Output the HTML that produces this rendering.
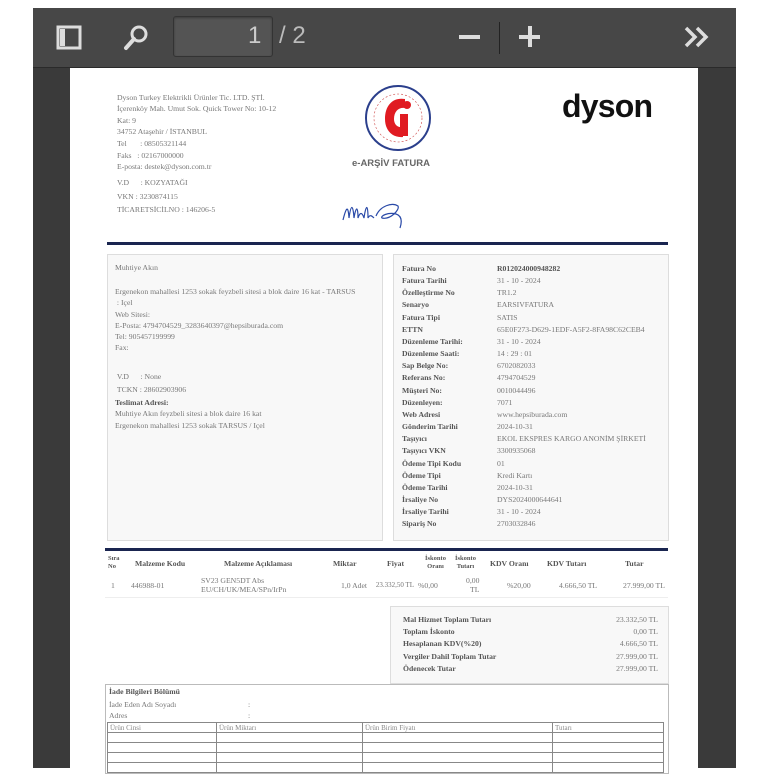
<!DOCTYPE html>
<html><head><meta charset="utf-8"><style>
*{margin:0;padding:0;box-sizing:border-box}
body{width:768px;height:768px;background:#fff;position:relative;overflow:hidden;font-family:"Liberation Serif",serif;color:#666}
.a{position:absolute;white-space:nowrap}
#frame{position:absolute;left:33px;top:8px;width:703px;height:760px;background:#3a3a3a}
#tb{position:absolute;left:33px;top:8px;width:703px;height:60px;background:#474747;border-bottom:1px solid #2a2a2a}
#page{position:absolute;left:70px;top:68px;width:628px;height:700px;background:#fff}
.s{font-size:7.7px;color:#777}
.b{font-weight:bold;color:#555}
.box{position:absolute;background:#f8f8f8;border:1px solid #ddd}
table{border-collapse:collapse}
</style></head><body>
<div id="frame"></div>
<div id="tb">
 <svg class="a" style="left:22px;top:17px" width="28" height="26" viewBox="0 0 28 26"><rect x="3" y="2" width="22" height="21" fill="none" stroke="#ddd" stroke-width="3"/><rect x="5" y="4" width="5" height="17" fill="#ddd"/></svg>
 <svg class="a" style="left:88px;top:15px" width="30" height="30" viewBox="0 0 30 30"><circle cx="18" cy="11" r="7" fill="none" stroke="#ddd" stroke-width="3"/><line x1="13" y1="16" x2="5" y2="25" stroke="#ddd" stroke-width="4" stroke-linecap="round"/></svg>
 <div class="a" style="left:140px;top:8px;width:100px;height:41px;background:#545454;border:1px solid #333;border-radius:3px;box-shadow:inset 0 1px 2px #3a3a3a"></div>
 <div class="a" style="left:215px;top:14px;font:24px 'Liberation Sans',sans-serif;color:#ccc">1</div>
 <div class="a" style="left:246px;top:14px;font:24px 'Liberation Sans',sans-serif;color:#bbb">/ 2</div>
 <div class="a" style="left:426px;top:27px;width:21px;height:4px;background:#ddd"></div>
 <div class="a" style="left:466px;top:14px;width:1px;height:32px;background:#222"></div>
 <div class="a" style="left:486px;top:27px;width:21px;height:4px;background:#ddd"></div>
 <div class="a" style="left:494.5px;top:18px;width:4px;height:21px;background:#ddd"></div>
 <svg class="a" style="left:650px;top:16px" width="30" height="26" viewBox="0 0 30 26"><path d="M3 4l9 9-9 9M14 4l9 9-9 9" fill="none" stroke="#ddd" stroke-width="3.5"/></svg>
</div>
<div id="page"></div>

<div class="a s" style="left:117px;top:92px;line-height:11.3px">Dyson Turkey Elektrikli Ürünler Tic. LTD. ŞTİ.<br>İçerenköy Mah. Umut Sok. Quick Tower No: 10-12<br>Kat: 9<br>34752 Ataşehir / İSTANBUL</div>
<div class="a s" style="left:117px;top:138px;line-height:12px">Tel&nbsp;&nbsp;&nbsp;&nbsp;&nbsp;&nbsp;&nbsp;: 08505321144<br>Faks&nbsp;&nbsp;&nbsp;: 02167000000</div>
<div class="a s" style="left:117px;top:162px">E-posta: destek@dyson.com.tr</div>
<div class="a s" style="left:117px;top:176px;line-height:13.5px">V.D&nbsp;&nbsp;&nbsp;&nbsp;&nbsp;&nbsp;: KOZYATAĞI<br>VKN : 3230874115<br>TİCARETSİCİLNO : 146206-5</div>

<svg class="a" style="left:363px;top:83px" width="70" height="70" viewBox="0 0 70 70"><circle cx="35" cy="35" r="32" fill="#fff" stroke="#2b3f8c" stroke-width="2"/><circle cx="35" cy="35" r="24" fill="none" stroke="#c44" stroke-width="0.6" stroke-dasharray="2 2"/><path d="M42 16 C30 14 22 22 22 36 C22 48 30 55 40 54 L40 44 C34 45 31 41 31 36 C31 28 36 24 42 25Z" fill="#e01b22"/><rect x="37" y="31" width="8" height="22" fill="#e01b22"/><circle cx="44" cy="22" r="4" fill="#e01b22"/></svg>
<div class="a" style="left:352px;top:158px;font:bold 9.5px 'Liberation Sans',sans-serif;color:#666">e-ARŞİV FATURA</div>
<svg class="a" style="left:340px;top:198px" width="75" height="32" viewBox="0 0 75 32"><path d="M3 22 C6 10 8 6 9 20 C11 6 13 6 14 20 C16 8 18 8 18 20 C20 14 22 14 24 20 C26 6 28 6 28 20 C30 16 32 18 34 20 M36 18 C40 8 52 4 58 8 C60 12 50 22 42 20 C40 18 48 14 56 16 C62 18 62 24 60 30" fill="none" stroke="#2a4aa8" stroke-width="1.2"/></svg>
<div class="a" style="left:562px;top:88px;font:bold 32px 'Liberation Sans',sans-serif;color:#111;letter-spacing:-0.8px">dyson</div>

<div class="a" style="left:107px;top:242px;width:561px;height:3px;background:#1a2550"></div>

<div class="box" style="left:107px;top:254px;width:276px;height:287px"></div>
<div class="a s" style="left:115px;top:263px">Muhtiye Akın</div>
<div class="a s" style="left:115px;top:286px;line-height:11.3px">Ergenekon mahallesi 1253 sokak feyzbeli sitesi a blok daire 16 kat - TARSUS<br>&nbsp;: Içel<br>Web Sitesi:<br>E-Posta: 4794704529_3283640397@hepsiburada.com<br>Tel: 905457199999<br>Fax:</div>
<div class="a s" style="left:115px;top:370px;line-height:13px">&nbsp;V.D&nbsp;&nbsp;&nbsp;&nbsp;&nbsp;&nbsp;: None<br>&nbsp;TCKN : 28602903906</div>
<div class="a s" style="left:115px;top:397px;line-height:11.3px"><span class="b">Teslimat Adresi:</span><br>Muhtiye Akın feyzbeli sitesi a blok daire 16 kat<br>Ergenekon mahallesi 1253 sokak TARSUS / Içel</div>

<div class="box" style="left:393px;top:254px;width:276px;height:287px"></div>
<div class="a s b" style="left:402px;top:263px;line-height:12.15px">Fatura No<br>Fatura Tarihi<br>Özelleştirme No<br>Senaryo<br>Fatura Tipi<br>ETTN<br>Düzenleme Tarihi:<br>Düzenleme Saati:<br>Sap Belge No:<br>Referans No:<br>Müşteri No:<br>Düzenleyen:<br>Web Adresi<br>Gönderim Tarihi<br>Taşıyıcı<br>Taşıyıcı VKN<br>Ödeme Tipi Kodu<br>Ödeme Tipi<br>Ödeme Tarihi<br>İrsaliye No<br>İrsaliye Tarihi<br>Sipariş No</div>
<div class="a s" style="left:497px;top:263px;line-height:12.15px"><b style="color:#555">R012024000948282</b><br>31 - 10 - 2024<br>TR1.2<br>EARSIVFATURA<br>SATIS<br>65E0F273-D629-1EDF-A5F2-8FA98C62CEB4<br>31 - 10 - 2024<br>14 : 29 : 01<br>6702082033<br>4794704529<br>0010044496<br>7071<br>www.hepsiburada.com<br>2024-10-31<br>EKOL EKSPRES KARGO ANONİM ŞİRKETİ<br>3300935068<br>01<br>Kredi Kartı<br>2024-10-31<br>DYS2024000644641<br>31 - 10 - 2024<br>2703032846</div>

<div class="a" style="left:105px;top:548px;width:563px;height:3px;background:#1a2550"></div>
<div class="a s b" style="left:108px;top:555px;line-height:8px;font-size:6.5px">Sıra<br>No</div>
<div class="a s b" style="left:135px;top:559px">Malzeme Kodu</div>
<div class="a s b" style="left:224px;top:559px">Malzeme Açıklaması</div>
<div class="a s b" style="left:333px;top:559px">Miktar</div>
<div class="a s b" style="left:387px;top:559px">Fiyat</div>
<div class="a s b" style="left:425px;top:555px;line-height:8px;text-align:center;font-size:6.5px">İskonto<br>Oranı</div>
<div class="a s b" style="left:455px;top:555px;line-height:8px;text-align:center;font-size:6.5px">İskonto<br>Tutarı</div>
<div class="a s b" style="left:490px;top:559px">KDV Oranı</div>
<div class="a s b" style="left:547px;top:559px">KDV Tutarı</div>
<div class="a s b" style="left:625px;top:559px">Tutar</div>
<div class="a s" style="left:111px;top:581px">1</div>
<div class="a s" style="left:131px;top:581px">446988-01</div>
<div class="a s" style="left:201px;top:576px;line-height:9px">SV23 GEN5DT Abs<br>EU/CH/UK/MEA/SPn/IrPn</div>
<div class="a s" style="left:341px;top:581px">1,0 Adet</div>
<div class="a s" style="left:370px;top:581px;width:44px;text-align:right;font-size:7px">23.332,50 TL</div>
<div class="a s" style="left:418px;top:581px">%0,00</div>
<div class="a s" style="left:466px;top:576px;line-height:9px;text-align:right">0,00<br>TL</div>
<div class="a s" style="left:507px;top:581px">%20,00</div>
<div class="a s" style="left:559px;top:581px">4.666,50 TL</div>
<div class="a s" style="left:623px;top:581px">27.999,00 TL</div>
<div class="a" style="left:105px;top:597px;width:563px;height:1px;background:#eee"></div>

<div class="box" style="left:390px;top:606px;width:279px;height:78px"></div>
<div class="a s b" style="left:403px;top:614px;line-height:12.2px">Mal Hizmet Toplam Tutarı<br>Toplam İskonto<br>Hesaplanan KDV(%20)<br>Vergiler Dahil Toplam Tutar<br>Ödenecek Tutar</div>
<div class="a s" style="left:590px;top:614px;width:68px;line-height:12.2px;text-align:right">23.332,50 TL<br>0,00 TL<br>4.666,50 TL<br>27.999,00 TL<br>27.999,00 TL</div>

<div class="a" style="left:105px;top:684px;width:564px;height:90px;border:1px solid #bbb"></div>
<div class="a s b" style="left:109px;top:687px">İade Bilgileri Bölümü</div>
<div class="a s" style="left:109px;top:699px;line-height:11px">İade Eden Adı Soyadı<br>Adres</div>
<div class="a s" style="left:248px;top:699px;line-height:11px">:<br>:</div>
<table class="a" style="left:107px;top:722px;width:557px;font-size:7px;color:#888;font-family:'Liberation Serif',serif">
<tr style="height:10px"><td style="width:109px;border:1px solid #888;padding-left:2px;line-height:8px">Ürün Cinsi</td><td style="width:146px;border:1px solid #888;padding-left:2px;line-height:8px">Ürün Miktarı</td><td style="width:190px;border:1px solid #888;padding-left:2px;line-height:8px">Ürün Birim Fiyatı</td><td style="border:1px solid #888;padding-left:2px;line-height:8px">Tutarı</td></tr>
<tr style="height:10px"><td style="border:1px solid #888"></td><td style="border:1px solid #888"></td><td style="border:1px solid #888"></td><td style="border:1px solid #888"></td></tr>
<tr style="height:10px"><td style="border:1px solid #888"></td><td style="border:1px solid #888"></td><td style="border:1px solid #888"></td><td style="border:1px solid #888"></td></tr>
<tr style="height:10px"><td style="border:1px solid #888"></td><td style="border:1px solid #888"></td><td style="border:1px solid #888"></td><td style="border:1px solid #888"></td></tr>
<tr style="height:10px"><td style="border:1px solid #888"></td><td style="border:1px solid #888"></td><td style="border:1px solid #888"></td><td style="border:1px solid #888"></td></tr>
</table>
</body></html>
